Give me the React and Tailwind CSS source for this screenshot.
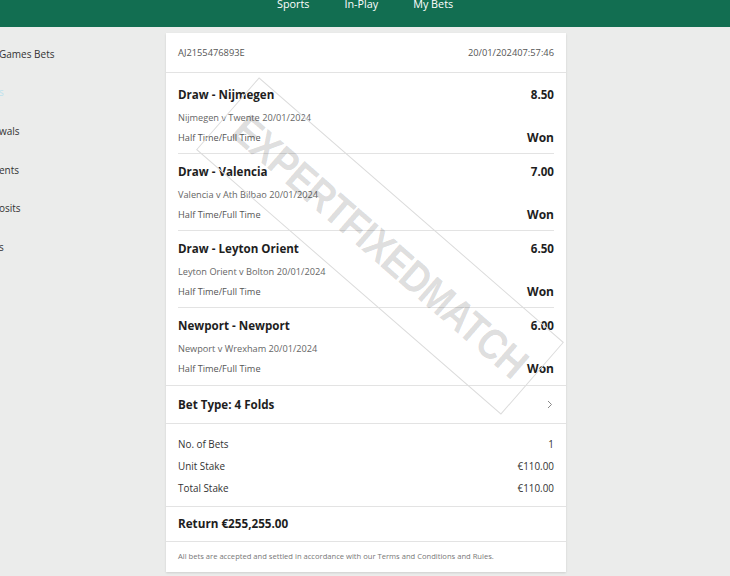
import React from "react";

const selections = [
  { title: "Draw - Nijmegen", odds: "8.50", match: "Nijmegen v Twente 20/01/2024" },
  { title: "Draw - Valencia", odds: "7.00", match: "Valencia v Ath Bilbao 20/01/2024" },
  { title: "Draw - Leyton Orient", odds: "6.50", match: "Leyton Orient v Bolton 20/01/2024" },
  { title: "Newport - Newport", odds: "6.00", match: "Newport v Wrexham 20/01/2024" },
];

const sideItems = [
  { t: "Games Bets", c: "text-[#333]" },
  { t: "s", c: "text-[#bfe3ee]" },
  { t: "wals", c: "text-[#333]" },
  { t: "ents", c: "text-[#333]" },
  { t: "osits", c: "text-[#333]" },
  { t: "s", c: "text-[#333]" },
];

export default function App() {
  return (
    <div
      className="relative w-[730px] h-[576px] overflow-hidden bg-[#ebeceb]"
      style={{ fontFamily: '"Open Sans", "Noto Sans", sans-serif' }}
    >
      {/* Header */}
      <div className="h-[27px] bg-[#126e51] flex items-start pl-[277px] gap-[35px] text-white text-[10.8px] leading-none">
        <span className="-mt-[1px]">Sports</span>
        <span className="-mt-[1px]">In-Play</span>
        <span className="-mt-[1px]">My Bets</span>
      </div>

      <div className="flex">
        {/* Sidebar */}
        <div className="w-[166px] pt-[8px] flex flex-col">
          {sideItems.map((s, i) => (
            <div key={i} className={`h-[38.6px] flex items-center -ml-[1px] text-[10px] ${s.c}`}>
              {s.t}
            </div>
          ))}
        </div>

        {/* Card */}
        <div className="w-[400px] mt-[6px] bg-white shadow-[0_1px_2px_rgba(0,0,0,0.12)] text-[#222]">
          <div className="h-[40px] px-3 flex items-center justify-between border-b border-[#e3e3e3] text-[9.3px] text-[#555]">
            <span>AJ2155476893E</span>
            <span>20/01/202407:57:46</span>
          </div>

          <div className="pt-[4px] border-b border-[#e3e3e3]">
            {selections.map((s, i) => (
              <div
                key={i}
                className={`mx-3 h-[77px] pt-[9px] ${i < selections.length - 1 ? "border-b border-[#e3e3e3]" : ""}`}
              >
                <div className="h-[18px] flex items-center justify-between font-bold text-[11.6px] text-[#1e1e1e]">
                  <span>{s.title}</span>
                  <span>{s.odds}</span>
                </div>
                <div className="mt-[7px] h-[14px] flex items-center text-[9.2px] text-[#666]">
                  {s.match}
                </div>
                <div className="mt-[4px] h-[18px] flex items-center justify-between">
                  <span className="text-[9.2px] text-[#555]">Half Time/Full Time</span>
                  <span className="font-bold text-[12px] text-[#1e1e1e]">Won</span>
                </div>
              </div>
            ))}
          </div>

          <div className="h-[38px] px-3 flex items-center justify-between border-b border-[#e3e3e3]">
            <span className="font-bold text-[11.6px] text-[#1e1e1e]">Bet Type: 4 Folds</span>
            <svg width="6" height="9" viewBox="0 0 6 9" className="mr-[1px]">
              <path d="M1 1 L4.5 4.5 L1 8" fill="none" stroke="#888" strokeWidth="1" />
            </svg>
          </div>

          <div className="px-3 pt-[9px] pb-[7px] border-b border-[#e3e3e3] text-[9.9px] text-[#333]">
            {[
              ["No. of Bets", "1"],
              ["Unit Stake", "€110.00"],
              ["Total Stake", "€110.00"],
            ].map(([a, b]) => (
              <div key={a} className="h-[22px] flex items-center justify-between">
                <span>{a}</span>
                <span>{b}</span>
              </div>
            ))}
          </div>

          <div className="h-[35px] px-3 flex items-center border-b border-[#e3e3e3] font-bold text-[11.7px] text-[#1e1e1e]">
            Return €255,255.00
          </div>

          <div className="h-[30px] px-3 flex items-center text-[7.6px] text-[#777]">
            All bets are accepted and settled in accordance with our Terms and Conditions and Rules.
          </div>
        </div>
      </div>

      {/* Watermark */}
      <div className="pointer-events-none absolute left-[178px] top-[198px] w-[404px] h-[96px] rotate-[41deg] border border-[#dcdcdc] flex items-center justify-center">
        <span
          className="font-bold text-[43px] tracking-[-1px] text-[rgba(0,0,0,0.14)] leading-none scale-x-[0.86]"
          style={{ fontFamily: '"Liberation Sans", Arial, sans-serif' }}
        >
          EXPERTFIXEDMATCH
        </span>
      </div>
    </div>
  );
}
